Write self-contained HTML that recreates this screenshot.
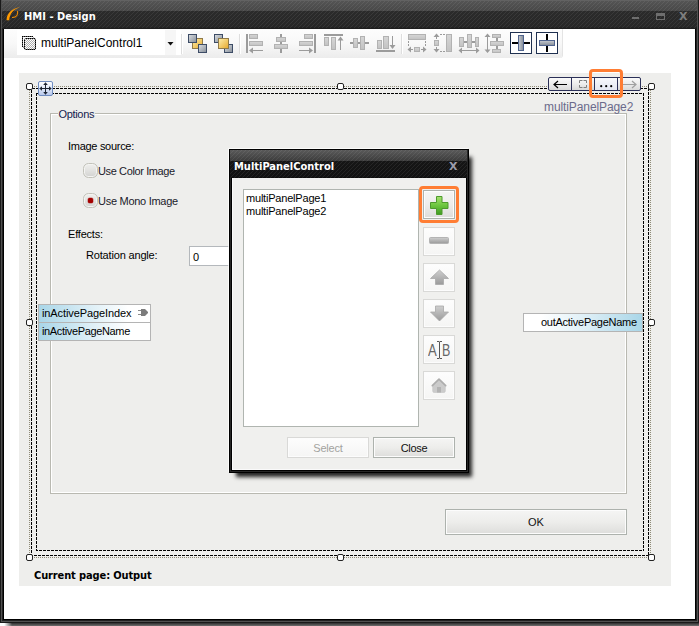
<!DOCTYPE html>
<html>
<head>
<meta charset="utf-8">
<title>HMI - Design</title>
<style>
html,body{margin:0;padding:0;}
body{width:699px;height:626px;position:relative;overflow:hidden;background:#fff;font-family:"Liberation Sans",sans-serif;font-size:11px;color:#000;}
.a{position:absolute;}
.t{position:absolute;white-space:nowrap;line-height:14px;}
.tb{font-family:"DejaVu Sans Condensed","Liberation Sans",sans-serif;font-weight:bold;font-size:11px;}
.btn{position:absolute;box-sizing:border-box;border:1px solid #adb2ad;box-shadow:inset 0 0 0 1px #fcfcfc;background:linear-gradient(#f5f5f4,#ededeb 50%,#dddddb);text-align:center;}
.btn.dis{border-color:#d9d9d7;background:linear-gradient(#fdfdfd,#f5f5f4);color:#a3a39f;}
.port{position:absolute;box-sizing:border-box;border:1px solid #b4b4b4;}
.h{position:absolute;width:7px;height:7px;box-sizing:border-box;border:1px solid #222;border-radius:2px;background:#fff;}
</style>
</head>
<body>

<!-- ===== window frame ===== -->
<div class="a" style="left:0;top:0;width:699px;height:623px;background:#1a1a1a;"></div>
<div class="a" style="left:1px;top:0;width:697px;height:622px;background:#505050;"></div>
<div class="a" style="left:2px;top:0;width:695px;height:621px;background:#222;"></div>
<div class="a" style="left:3px;top:0;width:693px;height:620px;background:#000;"></div>
<div class="a" style="left:4px;top:29px;width:691px;height:590px;background:#fff;"></div>
<!-- bottom shadow -->
<div class="a" style="left:0;top:623px;width:699px;height:3px;background:linear-gradient(#2e2e2e,#6e6e6e);"></div>
<div class="a" style="left:0;top:623px;width:12px;height:3px;background:linear-gradient(90deg,#fff 0,#fff 35%,rgba(255,255,255,0));"></div>

<!-- ===== title bar ===== -->
<svg class="a" style="left:2px;top:0;" width="695" height="29" viewBox="0 0 695 29">
  <defs>
    <linearGradient id="tg" x1="0" y1="0" x2="0" y2="1">
      <stop offset="0" stop-color="#626262"/><stop offset=".035" stop-color="#626262"/>
      <stop offset=".035" stop-color="#545454"/><stop offset=".379" stop-color="#484848"/>
      <stop offset=".379" stop-color="#2b2b2b"/><stop offset=".93" stop-color="#272727"/>
      <stop offset=".965" stop-color="#1e1e1e"/><stop offset="1" stop-color="#1e1e1e"/>
    </linearGradient>
    <pattern id="stp" width="4" height="4" patternUnits="userSpaceOnUse">
      <path d="M-1 1L1 -1M0 4L4 0M3 5L5 3" stroke="#fff" stroke-opacity=".07" stroke-width="1"/>
    </pattern>
  </defs>
  <rect width="697" height="29" fill="url(#tg)"/>
  <rect y="1" width="697" height="27" fill="url(#stp)"/>
</svg>
<svg class="a" style="left:5px;top:5px;" width="18" height="18" viewBox="0 0 18 18">
  <path d="M1.600 15.200 C1.400 8.500 7 3.200 15.200 2 C8.800 4.200 4.800 8.200 4.200 15.200 Z" fill="#ff9a00"/>
  <path d="M12.300 6 C13.800 9 11.500 12.800 7 12.400" fill="none" stroke="#f08c00" stroke-width="1.100"/>
</svg>
<div class="t tb" style="left:24px;top:10px;color:#fff;letter-spacing:.05px;">HMI - Design</div>
<!-- window buttons -->
<div class="a" style="left:632px;top:17px;width:7px;height:2px;background:#6e6e6e;"></div>
<div class="a" style="left:656px;top:13px;width:9px;height:7px;box-sizing:border-box;border:1px solid #6e6e6e;border-top-width:3px;"></div>
<div class="t" style="left:679px;top:10px;font-family:'DejaVu Sans','Liberation Sans',sans-serif;font-weight:bold;font-size:11px;color:#7e7e7e;line-height:14px;">X</div>

<!-- ===== toolbar ===== -->
<div class="a" style="left:4px;top:29px;width:558px;height:29px;background:linear-gradient(#fdfdfd,#f8f8f8 50%,#ececec);border-bottom-right-radius:3px;box-shadow:1px 0 0 #e4e4e4;"></div>
<div class="a" style="left:17px;top:30px;width:148px;height:25px;background:#fff;"></div>
<div class="a" style="left:165px;top:30px;width:11px;height:25px;background:#f6f6f6;"></div>
<div class="a" style="left:176px;top:30px;width:5px;height:25px;background:#fff;"></div>
<div class="t" style="left:41px;top:36px;font-size:12px;">multiPanelControl1</div>
<svg class="a" style="left:0;top:29px;" width="570" height="29" viewBox="0 29 570 29">
  <defs>
    <linearGradient id="gsq" x1="0" y1="0" x2="1" y2="1"><stop offset="0" stop-color="#dcdfe2"/><stop offset="1" stop-color="#858d98"/></linearGradient>
    <linearGradient id="ysq" x1="0" y1="0" x2="1" y2="1"><stop offset="0" stop-color="#fff0b0"/><stop offset="1" stop-color="#e6a82a"/></linearGradient>
    <linearGradient id="dfl" x1="0" y1="0" x2="0" y2="1"><stop offset="0" stop-color="#d6d6d6"/><stop offset="1" stop-color="#c2c2c2"/></linearGradient>
    <linearGradient id="bsqh" x1="0" y1="0" x2="1" y2="0"><stop offset="0" stop-color="#c8ccd2"/><stop offset="1" stop-color="#838b96"/></linearGradient>
    <linearGradient id="bsqv" x1="0" y1="0" x2="0" y2="1"><stop offset="0" stop-color="#c8ccd2"/><stop offset="1" stop-color="#838b96"/></linearGradient>
    <pattern id="chk" width="2" height="2" patternUnits="userSpaceOnUse"><rect width="2" height="2" fill="#fff"/><rect width="1" height="1" fill="#a0a0a0"/><rect x="1" y="1" width="1" height="1" fill="#a0a0a0"/></pattern>
  </defs>
<rect x="181" y="34" width="1" height="20" fill="#dedede"/>
<rect x="182" y="34" width="1" height="20" fill="#ffffff"/>
<rect x="239" y="34" width="1" height="20" fill="#dedede"/>
<rect x="240" y="34" width="1" height="20" fill="#ffffff"/>
<rect x="401" y="34" width="1" height="20" fill="#dedede"/>
<rect x="402" y="34" width="1" height="20" fill="#ffffff"/>
<path d="M22.500 46.500V36.500H32.500L33.500 37.500M22.500 46.500L24 47.500" fill="none" stroke="#000" stroke-opacity=".62"/>
<rect x="22" y="36" width="1" height="1" fill="#000"/>
<rect x="24" y="36" width="1" height="1" fill="#000"/>
<rect x="26" y="36" width="1" height="1" fill="#000"/>
<rect x="28" y="36" width="1" height="1" fill="#000"/>
<rect x="30" y="36" width="1" height="1" fill="#000"/>
<rect x="32" y="36" width="1" height="1" fill="#000"/>
<rect x="22" y="38" width="1" height="1" fill="#000"/>
<rect x="22" y="40" width="1" height="1" fill="#000"/>
<rect x="22" y="42" width="1" height="1" fill="#000"/>
<rect x="22" y="44" width="1" height="1" fill="#000"/>
<rect x="22" y="46" width="1" height="1" fill="#000"/>
<rect x="24.500" y="38.500" width="11" height="11" rx="1.200" fill="#fff" stroke="#000" stroke-opacity=".62"/>
<rect x="26" y="39" width="1" height="1" fill="#adadad"/>
<rect x="28" y="39" width="1" height="1" fill="#adadad"/>
<rect x="30" y="39" width="1" height="1" fill="#adadad"/>
<rect x="32" y="39" width="1" height="1" fill="#adadad"/>
<rect x="34" y="39" width="1" height="1" fill="#adadad"/>
<rect x="25" y="40" width="1" height="1" fill="#adadad"/>
<rect x="27" y="40" width="1" height="1" fill="#adadad"/>
<rect x="29" y="40" width="1" height="1" fill="#adadad"/>
<rect x="31" y="40" width="1" height="1" fill="#adadad"/>
<rect x="33" y="40" width="1" height="1" fill="#adadad"/>
<rect x="26" y="41" width="1" height="1" fill="#adadad"/>
<rect x="28" y="41" width="1" height="1" fill="#adadad"/>
<rect x="30" y="41" width="1" height="1" fill="#adadad"/>
<rect x="32" y="41" width="1" height="1" fill="#adadad"/>
<rect x="34" y="41" width="1" height="1" fill="#adadad"/>
<rect x="25" y="42" width="1" height="1" fill="#adadad"/>
<rect x="27" y="42" width="1" height="1" fill="#adadad"/>
<rect x="29" y="42" width="1" height="1" fill="#adadad"/>
<rect x="31" y="42" width="1" height="1" fill="#adadad"/>
<rect x="33" y="42" width="1" height="1" fill="#adadad"/>
<rect x="26" y="43" width="1" height="1" fill="#adadad"/>
<rect x="28" y="43" width="1" height="1" fill="#adadad"/>
<rect x="30" y="43" width="1" height="1" fill="#adadad"/>
<rect x="32" y="43" width="1" height="1" fill="#adadad"/>
<rect x="34" y="43" width="1" height="1" fill="#adadad"/>
<rect x="25" y="44" width="1" height="1" fill="#adadad"/>
<rect x="27" y="44" width="1" height="1" fill="#adadad"/>
<rect x="29" y="44" width="1" height="1" fill="#adadad"/>
<rect x="31" y="44" width="1" height="1" fill="#adadad"/>
<rect x="33" y="44" width="1" height="1" fill="#adadad"/>
<rect x="26" y="45" width="1" height="1" fill="#adadad"/>
<rect x="28" y="45" width="1" height="1" fill="#adadad"/>
<rect x="30" y="45" width="1" height="1" fill="#adadad"/>
<rect x="32" y="45" width="1" height="1" fill="#adadad"/>
<rect x="34" y="45" width="1" height="1" fill="#adadad"/>
<rect x="25" y="46" width="1" height="1" fill="#adadad"/>
<rect x="27" y="46" width="1" height="1" fill="#adadad"/>
<rect x="29" y="46" width="1" height="1" fill="#adadad"/>
<rect x="31" y="46" width="1" height="1" fill="#adadad"/>
<rect x="33" y="46" width="1" height="1" fill="#adadad"/>
<rect x="26" y="47" width="1" height="1" fill="#adadad"/>
<rect x="28" y="47" width="1" height="1" fill="#adadad"/>
<rect x="30" y="47" width="1" height="1" fill="#adadad"/>
<rect x="32" y="47" width="1" height="1" fill="#adadad"/>
<rect x="34" y="47" width="1" height="1" fill="#adadad"/>
<rect x="25" y="48" width="1" height="1" fill="#adadad"/>
<rect x="27" y="48" width="1" height="1" fill="#adadad"/>
<rect x="29" y="48" width="1" height="1" fill="#adadad"/>
<rect x="31" y="48" width="1" height="1" fill="#adadad"/>
<rect x="33" y="48" width="1" height="1" fill="#adadad"/>
<rect x="26" y="38" width="1" height="1" fill="#000"/>
<rect x="26" y="49" width="1" height="1" fill="#000"/>
<rect x="28" y="38" width="1" height="1" fill="#000"/>
<rect x="28" y="49" width="1" height="1" fill="#000"/>
<rect x="30" y="38" width="1" height="1" fill="#000"/>
<rect x="30" y="49" width="1" height="1" fill="#000"/>
<rect x="32" y="38" width="1" height="1" fill="#000"/>
<rect x="32" y="49" width="1" height="1" fill="#000"/>
<rect x="34" y="38" width="1" height="1" fill="#000"/>
<rect x="34" y="49" width="1" height="1" fill="#000"/>
<rect x="24" y="40" width="1" height="1" fill="#000"/>
<rect x="35" y="40" width="1" height="1" fill="#000"/>
<rect x="24" y="42" width="1" height="1" fill="#000"/>
<rect x="35" y="42" width="1" height="1" fill="#000"/>
<rect x="24" y="44" width="1" height="1" fill="#000"/>
<rect x="35" y="44" width="1" height="1" fill="#000"/>
<rect x="24" y="46" width="1" height="1" fill="#000"/>
<rect x="35" y="46" width="1" height="1" fill="#000"/>
<rect x="24" y="48" width="1" height="1" fill="#000"/>
<rect x="35" y="48" width="1" height="1" fill="#000"/>
<path d="M167.5 42h6l-3 3.5z" fill="#111"/>
<rect x="192.5" y="38.5" width="10" height="10" fill="url(#ysq)" stroke="#8f7a4a" />
<rect x="188.5" y="34.5" width="8" height="8" fill="url(#gsq)" stroke="#3d4c66" />
<rect x="198.5" y="44.5" width="8" height="8" fill="url(#gsq)" stroke="#3d4c66" />
<rect x="214.5" y="34.5" width="8" height="8" fill="url(#gsq)" stroke="#3d4c66" />
<rect x="224.5" y="44.5" width="8" height="8" fill="url(#gsq)" stroke="#3d4c66" />
<rect x="218.5" y="38.5" width="10" height="10" fill="url(#ysq)" stroke="#8f7a4a" />
<rect x="246" y="34" width="2" height="19" fill="#9b9b9b"/>
<rect x="249.5" y="34.5" width="8" height="4" fill="url(#dfl)" stroke="#b2b2b2" />
<rect x="249.5" y="41.5" width="13" height="4" fill="url(#dfl)" stroke="#b2b2b2" />
<rect x="250" y="50" width="13" height="1" fill="#9b9b9b"/>
<path d="M249 50.5l4-3v6z" fill="#9b9b9b"/>
<rect x="280" y="34" width="2" height="19" fill="#9b9b9b"/>
<rect x="276.5" y="37.5" width="9" height="4" fill="url(#dfl)" stroke="#b2b2b2" />
<rect x="274.5" y="44.5" width="13" height="4" fill="url(#dfl)" stroke="#b2b2b2" />
<rect x="314" y="34" width="2" height="19" fill="#9b9b9b"/>
<rect x="304.5" y="34.5" width="8" height="4" fill="url(#dfl)" stroke="#b2b2b2" />
<rect x="299.5" y="41.5" width="13" height="4" fill="url(#dfl)" stroke="#b2b2b2" />
<rect x="299" y="50" width="13" height="1" fill="#9b9b9b"/>
<path d="M313 50.5l-4-3v6z" fill="#9b9b9b"/>
<rect x="324" y="34" width="19" height="2" fill="#9b9b9b"/>
<rect x="324.5" y="37.5" width="4" height="8" fill="url(#dfl)" stroke="#b2b2b2" />
<rect x="331.5" y="37.5" width="4" height="12" fill="url(#dfl)" stroke="#b2b2b2" />
<rect x="340" y="38" width="1" height="12" fill="#9b9b9b"/>
<path d="M340.5 36.5l-3 4h6z" fill="#9b9b9b"/>
<rect x="350" y="42" width="19" height="2" fill="#9b9b9b"/>
<rect x="353.5" y="38.5" width="4" height="9" fill="url(#dfl)" stroke="#b2b2b2" />
<rect x="360.5" y="36.5" width="4" height="13" fill="url(#dfl)" stroke="#b2b2b2" />
<rect x="376" y="50" width="19" height="2" fill="#9b9b9b"/>
<rect x="377.5" y="40.5" width="4" height="8" fill="url(#dfl)" stroke="#b2b2b2" />
<rect x="383.5" y="36.5" width="5" height="12" fill="url(#dfl)" stroke="#b2b2b2" />
<rect x="392" y="36" width="1" height="11" fill="#9b9b9b"/>
<path d="M392.5 49l-3-4h6z" fill="#9b9b9b"/>
<rect x="408.5" y="34.5" width="17" height="5" fill="url(#dfl)" stroke="#b2b2b2" />
<path d="M408.5 41v6M425.5 41v6" stroke="#9b9b9b" stroke-dasharray="2 1" fill="none"/>
<rect x="414.5" y="47.5" width="5" height="4" fill="url(#dfl)" stroke="#b2b2b2" />
<rect x="409" y="49" width="4" height="1" fill="#9b9b9b"/>
<path d="M407.5 49.5l3.5-3v6z" fill="#9b9b9b"/>
<rect x="421" y="49" width="4" height="1" fill="#9b9b9b"/>
<path d="M426.5 49.5l-3.5-3v6z" fill="#9b9b9b"/>
<rect x="446.5" y="34.5" width="5" height="17" fill="url(#dfl)" stroke="#b2b2b2" />
<path d="M440 34.5h5M440 51.5h5" stroke="#9b9b9b" stroke-dasharray="2 1" fill="none"/>
<rect x="434.5" y="40.5" width="4" height="5" fill="url(#dfl)" stroke="#b2b2b2" />
<rect x="436" y="35" width="1" height="4" fill="#9b9b9b"/>
<path d="M436.5 33.5l-3 3.5h6z" fill="#9b9b9b"/>
<rect x="436" y="47" width="1" height="4" fill="#9b9b9b"/>
<path d="M436.5 52.5l-3-3.5h6z" fill="#9b9b9b"/>
<rect x="463" y="41" width="13" height="2" fill="#9b9b9b"/>
<rect x="459.5" y="37.5" width="4" height="9" fill="url(#dfl)" stroke="#b2b2b2" />
<rect x="467.5" y="34.5" width="4" height="13" fill="url(#dfl)" stroke="#b2b2b2" />
<rect x="475.5" y="37.5" width="3" height="9" fill="url(#dfl)" stroke="#b2b2b2" />
<rect x="461" y="50" width="17" height="1" fill="#9b9b9b"/>
<path d="M458.5 50.5l3.5-3v6zM479.5 50.5l-3.5-3v6z" fill="#9b9b9b"/>
<rect x="487" y="36" width="1" height="15" fill="#9b9b9b"/>
<path d="M487.5 33.5l-3 3.5h6zM487.5 53l-3-3.5h6z" fill="#9b9b9b"/>
<rect x="496" y="37" width="2" height="13" fill="#9b9b9b"/>
<rect x="492.5" y="34.5" width="8" height="3" fill="url(#dfl)" stroke="#b2b2b2" />
<rect x="490.5" y="41.5" width="13" height="4" fill="url(#dfl)" stroke="#b2b2b2" />
<rect x="492.5" y="49.5" width="8" height="3" fill="url(#dfl)" stroke="#b2b2b2" />
<rect x="510.5" y="32.5" width="21" height="21" fill="#fff" stroke="#1f3050" />
<rect x="512" y="42" width="18" height="2" fill="#000"/>
<rect x="518.5" y="35.5" width="5" height="15" fill="url(#bsqh)" stroke="#50648e" />
<rect x="536.5" y="32.5" width="21" height="21" fill="#fff" stroke="#1f3050" />
<rect x="546" y="34" width="2" height="18" fill="#000"/>
<rect x="539.5" y="40.5" width="15" height="5" fill="url(#bsqv)" stroke="#50648e" />
</svg>

<!-- ===== design surface ===== -->
<div class="a" style="left:19px;top:73px;width:652px;height:513px;background:#eeeeec;"></div>
<svg class="a" style="left:0;top:73px;" width="699" height="513" viewBox="0 73 699 513" shape-rendering="crispEdges">
<rect x="29.5" y="86.5" width="621" height="471" fill="none" stroke="#908c78" stroke-dasharray="1 1"/>
<rect x="31.5" y="88.5" width="617" height="467" fill="none" stroke="#000" stroke-dasharray="3 1"/>
<rect x="36.5" y="93.5" width="607" height="457" fill="none" stroke="#000" stroke-dasharray="3 1" stroke-dashoffset="2"/>
</svg>
<div class="a" style="left:50px;top:113px;width:577px;height:381px;box-sizing:border-box;border:1px solid #b9b9b1;box-shadow:inset 0 0 0 1px #fff;"></div>
<div class="t" style="left:57.500px;top:107px;padding:0 1px;background:#eeeeec;color:#151b4e;letter-spacing:-.33px;">Options</div>
<div class="t" style="left:68px;top:139px;letter-spacing:-.29px;">Image source:</div>
<div class="t" style="left:98px;top:164px;letter-spacing:-.38px;color:#1a1a2a;">Use Color Image</div>
<div class="t" style="left:98px;top:194px;letter-spacing:-.28px;color:#1a1a2a;">Use Mono Image</div>
<div class="t" style="left:68px;top:227px;letter-spacing:-.2px;">Effects:</div>
<div class="t" style="left:86px;top:248px;letter-spacing:-.17px;">Rotation angle:</div>
<div class="a" style="left:83px;top:163px;width:15px;height:15px;box-sizing:border-box;border-radius:5.500px;border:1px solid #c2c2ba;background:linear-gradient(#efefed,#e2e2e0 50%,#d2d2d0);box-shadow:inset 0 0 0 1px #f4f4f2;"></div>
<div class="a" style="left:83px;top:193px;width:15px;height:15px;box-sizing:border-box;border-radius:5.500px;border:1px solid #c2c2ba;background:linear-gradient(#efefed,#e2e2e0 50%,#d2d2d0);box-shadow:inset 0 0 0 1px #f4f4f2;"></div>
<div class="a" style="left:88px;top:198px;width:5px;height:5px;border-radius:1.500px;background:#a40000;box-shadow:0 0 0 .5px rgba(164,0,0,.5);"></div>
<div class="a" style="left:189px;top:246px;width:60px;height:20px;box-sizing:border-box;border:1px solid #b4b8bc;background:#fff;"></div>
<div class="t" style="left:193px;top:250px;">0</div>
<div class="port" style="left:38px;top:304px;width:113px;height:19px;background:linear-gradient(90deg,#a9d6e8,#dceef6 45%,#fff 80%);"></div>
<div class="port" style="left:38px;top:322px;width:113px;height:19px;background:linear-gradient(90deg,#a9d6e8,#dceef6 45%,#fff 80%);"></div>
<div class="t" style="left:42px;top:306px;letter-spacing:-.1px;">inActivePageIndex</div>
<div class="t" style="left:42px;top:324px;letter-spacing:-.35px;">inActivePageName</div>
<svg class="a" style="left:137px;top:308px;" width="12" height="10" viewBox="0 0 12 10"><path d="M1 2.5h3M1 6.5h3" stroke="#8a8a8a" stroke-width="1"/><path d="M4 1h4l3 3v1l-3 3h-4z" fill="#7c7c7c"/></svg>
<div class="port" style="left:523px;top:313px;width:120px;height:19px;background:linear-gradient(90deg,#fff 15%,#dceef6 55%,#a9d6e8);"></div>
<div class="t" style="left:541px;top:315px;letter-spacing:-.26px;">outActivePageName</div>
<div class="btn" style="left:445px;top:509px;width:182px;height:26px;line-height:24px;color:#111;">OK</div>
<div class="t tb" style="left:34px;top:569px;letter-spacing:-.12px;">Current page: Output</div>
<div class="t" style="left:544px;top:100px;font-size:12px;color:#6b6b8b;letter-spacing:-.1px;">multiPanelPage2</div>
<div class="h" style="left:26px;top:83px;"></div>
<div class="h" style="left:337px;top:83px;"></div>
<div class="h" style="left:647.5px;top:83px;"></div>
<div class="h" style="left:26px;top:319px;"></div>
<div class="h" style="left:647.5px;top:319px;"></div>
<div class="h" style="left:26px;top:554px;"></div>
<div class="h" style="left:337px;top:554px;"></div>
<div class="h" style="left:647.5px;top:554px;"></div>
<div class="a" style="left:38px;top:81px;width:15px;height:15px;box-sizing:border-box;border:1px solid #6f8cc0;border-radius:2px;background:linear-gradient(#fdfdff,#d8e2f6 60%,#b9c9ec);"></div>
<svg class="a" style="left:38px;top:81px;" width="15" height="15" viewBox="0 0 15 15"><path d="M7.500 3v9M3 7.500h9" stroke="#1c2433" stroke-width="1" fill="none"/><path d="M7.500 1.300l-2.300 2.700h4.600zM7.500 13.700l-2.300-2.700h4.600zM1.300 7.500l2.700-2.300v4.600zM13.700 7.500l-2.700-2.300v4.600z" fill="#1c2433"/></svg>
<div class="a" style="left:548px;top:77px;width:93px;height:14px;box-sizing:border-box;border:1px solid #2b3058;border-radius:2px;background:linear-gradient(#fbfbfb,#ececec 50%,#d9d9d9);"></div>
<div class="a" style="left:595px;top:78px;width:22px;height:12px;background:linear-gradient(#f7f8fc,#e4e7f2);"></div>
<svg class="a" style="left:548px;top:77px;" width="93" height="14" viewBox="548 77 93 14"><path d="M571.5 78v12M594.5 78v12M617.5 78v12" stroke="#2b3058"/><path d="M554 84.5h13M558 81l-4 3.500l4 3.500" stroke="#000" stroke-width="1.200" fill="none"/><path d="M579.500 83V80.500H582.500M583.500 80.500H586.500V83M586.500 85V87.500H583.500M582.500 87.500H579.500V85" stroke="#808080" fill="none"/><circle cx="601.200" cy="86.200" r="1.100" fill="#000"/><circle cx="606.200" cy="86.200" r="1.100" fill="#000"/><circle cx="611.200" cy="86.200" r="1.100" fill="#000"/><path d="M623 84.500h13M632 81l4 3.500l-4 3.500" stroke="#a0a0a0" stroke-width="1.200" fill="none"/></svg>
<div class="a" style="left:589px;top:69px;width:34px;height:29px;box-sizing:border-box;border:3px solid #ff7d33;border-radius:4px;"></div>
<div class="a" style="left:229px;top:149px;width:240px;height:324px;background:#000;box-shadow:-1px -1px 0 0 rgba(255,255,255,.75),5px 6px 4px -2px rgba(0,0,0,.85);"></div>
<div class="a" style="left:230px;top:150px;width:238px;height:322px;background:#262626;"></div>
<div class="a" style="left:231px;top:177px;width:236px;height:294px;background:#000;"></div>
<div class="a" style="left:232px;top:178px;width:234px;height:292px;background:#f0f0ee;box-shadow:inset 1px 0 0 #fafafa,inset 0 -1px 0 #fafafa;"></div>
<svg class="a" style="left:230px;top:150px;" width="237" height="28" viewBox="0 0 237 28">
  <defs>
    <linearGradient id="dg" x1="0" y1="0" x2="0" y2="1">
      <stop offset="0" stop-color="#5a5a5a"/><stop offset=".393" stop-color="#3c3c3c"/>
      <stop offset=".393" stop-color="#161616"/><stop offset=".95" stop-color="#121212"/>
      <stop offset="1" stop-color="#0a0a0a"/>
    </linearGradient>
  </defs>
  <rect width="238" height="28" fill="url(#dg)"/>
  <rect width="238" height="28" fill="url(#stp)"/>
</svg>
<div class="t tb" style="left:234px;top:160px;color:#fff;">MultiPanelControl</div>
<div class="t" style="left:449px;top:160px;font-family:'DejaVu Sans','Liberation Sans',sans-serif;font-weight:bold;font-size:11px;color:#9c9caa;line-height:14px;">X</div>
<div class="a" style="left:243px;top:189px;width:176px;height:238px;box-sizing:border-box;border:1px solid #b0b5b0;background:#fff;"></div>
<div class="t" style="left:246px;top:192px;line-height:13px;letter-spacing:-.2px;">multiPanelPage1<br>multiPanelPage2</div>
<div class="btn" style="left:423px;top:190px;width:32px;height:29px;"></div>
<div class="btn dis" style="left:423px;top:226.5px;width:32px;height:29px;"></div>
<div class="btn dis" style="left:423px;top:262.5px;width:32px;height:29px;"></div>
<div class="btn dis" style="left:423px;top:298.5px;width:32px;height:29px;"></div>
<div class="btn dis" style="left:423px;top:334.5px;width:32px;height:29px;"></div>
<div class="btn dis" style="left:423px;top:370.5px;width:32px;height:29px;"></div>
<svg class="a" style="left:423px;top:190px;" width="32" height="29" viewBox="423 190 32 29">
  <defs><linearGradient id="gr" x1="0" y1="0" x2="0" y2="1"><stop offset="0" stop-color="#a6e070"/><stop offset=".5" stop-color="#6cc63e"/><stop offset="1" stop-color="#3f9a22"/></linearGradient></defs>
  <path d="M436.500 196.500h5.500v6h6v6h-6v6h-5.500v-6h-6v-6h6z" fill="url(#gr)" stroke="#4d9a2c" stroke-width="1" stroke-linejoin="round"/>
</svg>
<svg class="a" style="left:423px;top:226px;" width="32" height="29" viewBox="423 226 32 29">
  <defs><linearGradient id="gy" x1="0" y1="0" x2="0" y2="1"><stop offset="0" stop-color="#cfcfcf"/><stop offset="1" stop-color="#9a9a9a"/></linearGradient></defs>
  <rect x="429.500" y="237.500" width="19" height="6" rx="1" fill="url(#gy)" stroke="#b4b4b4"/>
</svg>
<svg class="a" style="left:423px;top:262px;" width="32" height="29" viewBox="423 262 32 29">
  <path d="M439.500 270l9 8.500h-5v6h-8v-6h-5z" fill="url(#gy)" stroke="#a8a8a8" stroke-width=".8"/>
</svg>
<svg class="a" style="left:423px;top:298px;" width="32" height="29" viewBox="423 298 32 29">
  <path d="M439.500 321l9-9h-5v-6h-8v6h-5z" fill="url(#gy)" stroke="#a8a8a8" stroke-width=".8"/>
</svg>
<div class="t" style="left:428px;top:342px;font-size:16px;line-height:18px;color:#666;transform:scaleX(.82);transform-origin:0 0;">A</div>
<div class="t" style="left:442px;top:342px;font-size:16px;line-height:18px;color:#666;transform:scaleX(.78);transform-origin:0 0;">B</div>
<svg class="a" style="left:435px;top:340px;" width="9" height="20" viewBox="0 0 9 20"><path d="M4.500 1.500v17M2 1.500h2M5 1.500h2M2 18.500h2M5 18.500h2" stroke="#555" stroke-width="1" fill="none"/></svg>
<svg class="a" style="left:423px;top:370.500px;" width="32" height="29" viewBox="423 370.500 32 29">
  <path d="M439 379l6.300 6v5.500a1.500 1.500 0 0 1 -1.500 1.500h-9.600a1.500 1.500 0 0 1 -1.500 -1.500v-5.500z" fill="#cbcbcb" stroke="#c2c2c2" stroke-width=".6"/>
  <path d="M432.300 385.200l6.700-6.500l6.700 6.500" fill="none" stroke="#adadad" stroke-width="1.700" stroke-linecap="round" stroke-linejoin="round"/>
  <rect x="437" y="386.500" width="4" height="5.500" fill="#b2b2b2"/>
</svg>
<div class="btn dis" style="left:287px;top:437px;width:82px;height:21px;line-height:21px;letter-spacing:-.2px;">Select</div>
<div class="btn" style="left:373px;top:437px;width:82px;height:21px;line-height:21px;letter-spacing:-.3px;color:#111;">Close</div>
<div class="a" style="left:419px;top:186px;width:40px;height:37px;box-sizing:border-box;border:3px solid #ff7d33;border-radius:4px;"></div>
</body>
</html>
